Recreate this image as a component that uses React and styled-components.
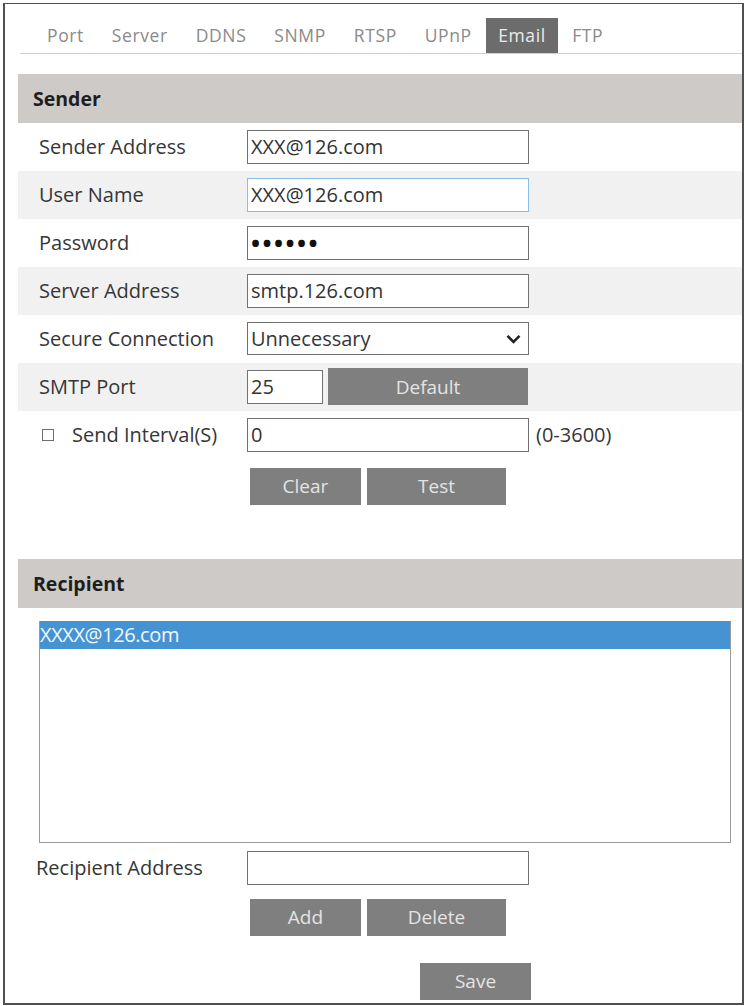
import React from 'react';
import styled, { createGlobalStyle } from 'styled-components';

const GlobalStyle = createGlobalStyle`
    body {
        margin: 0;
        background: #fff;
        font-family: "Open Sans", "Noto Sans", sans-serif;
    }
`;

const Frame = styled.div`
    box-sizing: border-box;
    margin: 3px 0 0 3px;
    width: 741px;
    height: 1002px;
    border: 2px solid #505050;
    border-top-width: 1.5px;
    padding: 13.5px 0 0 13px;
`;

const TabBar = styled.nav`
    display: flex;
    margin-left: 2px;
    padding-left: 13px;
    border-bottom: 1px solid #cfcfcf;
`;

const Tab = styled.span`
    padding: 0 ${(p) => (p.$active ? 12.5 : 14)}px;
    height: 35px;
    line-height: 35px;
    font-size: 17.5px;
    letter-spacing: 0.6px;
    color: ${(p) => (p.$active ? '#ececec' : '#8a8a8a')};
    background: ${(p) => (p.$active ? '#6c6c6c' : 'transparent')};
`;

const SectionHeader = styled.div`
    margin-top: ${(p) => p.$top}px;
    height: 49px;
    display: flex;
    align-items: center;
    padding-left: 15px;
    background: #cdcac8;
    font-size: 19.5px;
    font-weight: 700;
    color: #1e1e1e;
`;

const Row = styled.div`
    height: 48px;
    display: flex;
    align-items: center;
    padding-left: 21px;
    background: ${(p) => (p.$shade ? '#f1f1f1' : '#fff')};
`;

const Label = styled.label`
    width: ${(p) => p.$w || 208}px;
    flex-shrink: 0;
    display: flex;
    align-items: center;
    font-size: 20px;
    color: #363636;
`;

const TextBox = styled.input`
    box-sizing: border-box;
    width: ${(p) => p.$w || 282}px;
    height: 34px;
    margin: 0;
    padding: 0 3px;
    border: 1.5px solid ${(p) => (p.$focus ? '#8cbde6' : '#727272')};
    border-radius: 0;
    outline: none;
    font-family: inherit;
    font-size: ${(p) => (p.$dots ? 24 : 20)}px;
    font-weight: ${(p) => (p.$dots ? 700 : 400)};
    letter-spacing: ${(p) => (p.$dots ? 2.5 : 0)}px;
    color: ${(p) => (p.$dots ? '#111' : '#333')};
    background: #fff;
`;

const SelectBox = styled.div`
    box-sizing: border-box;
    width: 282px;
    height: 33px;
    display: flex;
    align-items: center;
    justify-content: space-between;
    padding: 0 7px 0 3px;
    border: 1.5px solid #727272;
    font-size: 20px;
    color: #363636;
    background: #fff;
`;

const Check = styled.span`
    box-sizing: border-box;
    width: 12px;
    height: 12px;
    margin: 0 18px 0 3px;
    border: 1px solid #6e6e6e;
    background: #fff;
`;

const Hint = styled.span`
    margin-left: 7px;
    font-size: 20px;
    color: #363636;
`;

const Button = styled.button`
    box-sizing: border-box;
    width: ${(p) => p.$w}px;
    height: 37px;
    margin: 0;
    margin-left: ${(p) => p.$gap || 0}px;
    padding: 0;
    border: none;
    border-radius: 0;
    background: #7f7f7f;
    font-family: inherit;
    font-size: 19px;
    color: #e4e4e4;
`;

const ButtonRow = styled.div`
    display: flex;
    margin-top: ${(p) => p.$top}px;
    padding-left: ${(p) => p.$left || 232}px;
`;

const ListBox = styled.div`
    box-sizing: border-box;
    margin: 13px 0 0 21px;
    width: 692px;
    height: 222px;
    border: 1px solid #9a9a9a;
    border-top: none;
`;

const ListItem = styled.div`
    height: 28px;
    display: flex;
    align-items: center;
    background: ${(p) => (p.$selected ? '#4593d3' : 'transparent')};
    color: ${(p) => (p.$selected ? '#f2f7fc' : '#333')};
    font-size: 20px;
    letter-spacing: -0.4px;
`;

const AddressRow = styled.div`
    display: flex;
    align-items: center;
    margin-top: 8px;
    padding-left: 18px;
`;

const Chevron = () => (
    <svg width="15" height="10" viewBox="0 0 15 10">
        <path d="M1.5 1.8 L7.5 7.8 L13.5 1.8" fill="none" stroke="#222" strokeWidth="2.6" />
    </svg>
);

const senderRows = [
    { label: 'Sender Address', value: 'XXX@126.com' },
    { label: 'User Name', value: 'XXX@126.com', focus: true },
    { label: 'Password', value: '••••••', dots: true },
    { label: 'Server Address', value: 'smtp.126.com' },
];

const tabs = ['Port', 'Server', 'DDNS', 'SNMP', 'RTSP', 'UPnP', 'Email', 'FTP'];

export default function App() {
    return (
        <>
            <GlobalStyle />
            <Frame>
                <TabBar>
                    {tabs.map((t) => (
                        <Tab key={t} $active={t === 'Email'}>
                            {t}
                        </Tab>
                    ))}
                </TabBar>

                <SectionHeader $top={20}>Sender</SectionHeader>
                {senderRows.map((r, i) => (
                    <Row key={r.label} $shade={i % 2 === 1}>
                        <Label>{r.label}</Label>
                        <TextBox defaultValue={r.value} $focus={r.focus} $dots={r.dots} />
                    </Row>
                ))}
                <Row>
                    <Label>Secure Connection</Label>
                    <SelectBox>
                        Unnecessary
                        <Chevron />
                    </SelectBox>
                </Row>
                <Row $shade>
                    <Label>SMTP Port</Label>
                    <TextBox $w={76} defaultValue="25" />
                    <Button $w={200} $gap={5}>Default</Button>
                </Row>
                <Row>
                    <Label>
                        <Check />
                        Send Interval(S)
                    </Label>
                    <TextBox defaultValue="0" />
                    <Hint>(0-3600)</Hint>
                </Row>
                <ButtonRow $top={9}>
                    <Button $w={111}>Clear</Button>
                    <Button $w={139} $gap={6}>Test</Button>
                </ButtonRow>

                <SectionHeader $top={54}>Recipient</SectionHeader>
                <ListBox>
                    <ListItem $selected>XXXX@126.com</ListItem>
                </ListBox>
                <AddressRow>
                    <Label $w={211}>Recipient Address</Label>
                    <TextBox />
                </AddressRow>
                <ButtonRow $top={14}>
                    <Button $w={111}>Add</Button>
                    <Button $w={139} $gap={6}>Delete</Button>
                </ButtonRow>
                <ButtonRow $top={27} $left={402}>
                    <Button $w={111}>Save</Button>
                </ButtonRow>
            </Frame>
        </>
    );
}
